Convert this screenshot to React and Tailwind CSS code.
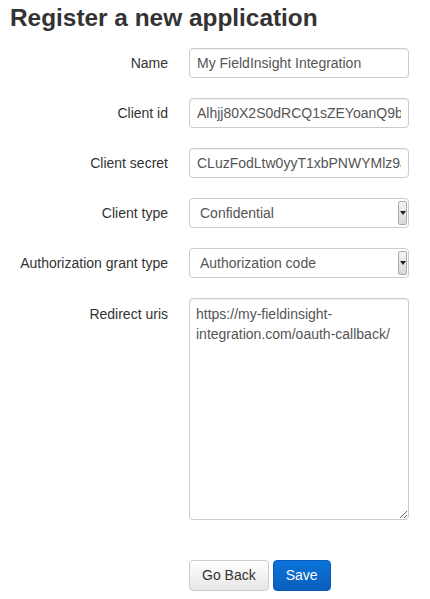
import React from 'react';

const font = { fontFamily: '"Liberation Sans", Arial, sans-serif' };

const TextInput = ({ value }) => (
  <input
    readOnly
    defaultValue={value}
    className="h-[30px] w-[220px] border border-[#ccc] rounded-[4px] bg-white px-[7px] text-[14px] text-[#555] outline-none shadow-[inset_0_1px_1px_rgba(0,0,0,0.075)]"
    style={font}
  />
);

const SelectBox = ({ value }) => (
  <div className="relative h-[30px] w-[220px] border border-[#ccc] rounded-[4px] bg-white pl-[10px] flex items-center text-[14px] text-[#555]">
    {value}
    {/* native-looking dropdown button */}
    <div className="absolute right-[1px] top-[2px] bottom-[2px] w-[9px] bg-gradient-to-b from-[#f4f4f4] to-[#d8d8d8] border border-[#aaa] rounded-[2px] flex items-center justify-center">
      <div className="w-0 h-0 border-l-[3px] border-r-[3px] border-t-[4px] border-l-transparent border-r-transparent border-t-[#222]" />
    </div>
  </div>
);

const Row = ({ label, children, top = false }) => (
  <div className={`flex gap-[21px] ${top ? 'items-start' : 'items-center'}`}>
    <label className={`w-[168px] text-right text-[14px] text-[#333] ${top ? 'pt-[6px]' : ''}`}>
      {label}
    </label>
    {children}
  </div>
);

export default function App() {
  return (
    <div className="w-[430px] h-[599px] bg-white overflow-hidden" style={font}>
      <h2 className="pl-[10px] pt-[3px] text-[24.4px] leading-[30px] font-bold text-[#333]">
        Register a new application
      </h2>
      <div className="mt-[15px] flex flex-col gap-[20px]">
        <Row label="Name">
          <TextInput value="My FieldInsight Integration" />
        </Row>
        <Row label="Client id">
          <TextInput value="Alhjj80X2S0dRCQ1sZEYoanQ9bT7cVzW1eXuPq3b" />
        </Row>
        <Row label="Client secret">
          <TextInput value="CLuzFodLtw0yyT1xbPNWYMlz9aQx7Lrk2Nd8hGf" />
        </Row>
        <Row label="Client type">
          <SelectBox value="Confidential" />
        </Row>
        <Row label="Authorization grant type">
          <SelectBox value="Authorization code" />
        </Row>
        <Row label="Redirect uris" top>
          <textarea
            readOnly
            defaultValue="https://my-fieldinsight-integration.com/oauth-callback/"
            className="h-[222px] w-[220px] border border-[#ccc] rounded-[4px] bg-white px-[6px] py-[5px] text-[14px] leading-[20px] text-[#555] resize outline-none shadow-[inset_0_1px_1px_rgba(0,0,0,0.075)]"
            style={font}
          />
        </Row>
      </div>
      <div className="mt-[40px] pl-[189px] flex gap-[4px]">
        <button className="h-[31px] px-[12px] border border-[#ccc] rounded-[4px] bg-gradient-to-b from-white to-[#e6e6e6] text-[14px] text-[#333]">
          Go Back
        </button>
        <button className="h-[31px] px-[12px] border border-[#0a5bb5] rounded-[4px] bg-gradient-to-b from-[#0b73d9] to-[#0a5fbd] text-[14px] text-white">
          Save
        </button>
      </div>
    </div>
  );
}
